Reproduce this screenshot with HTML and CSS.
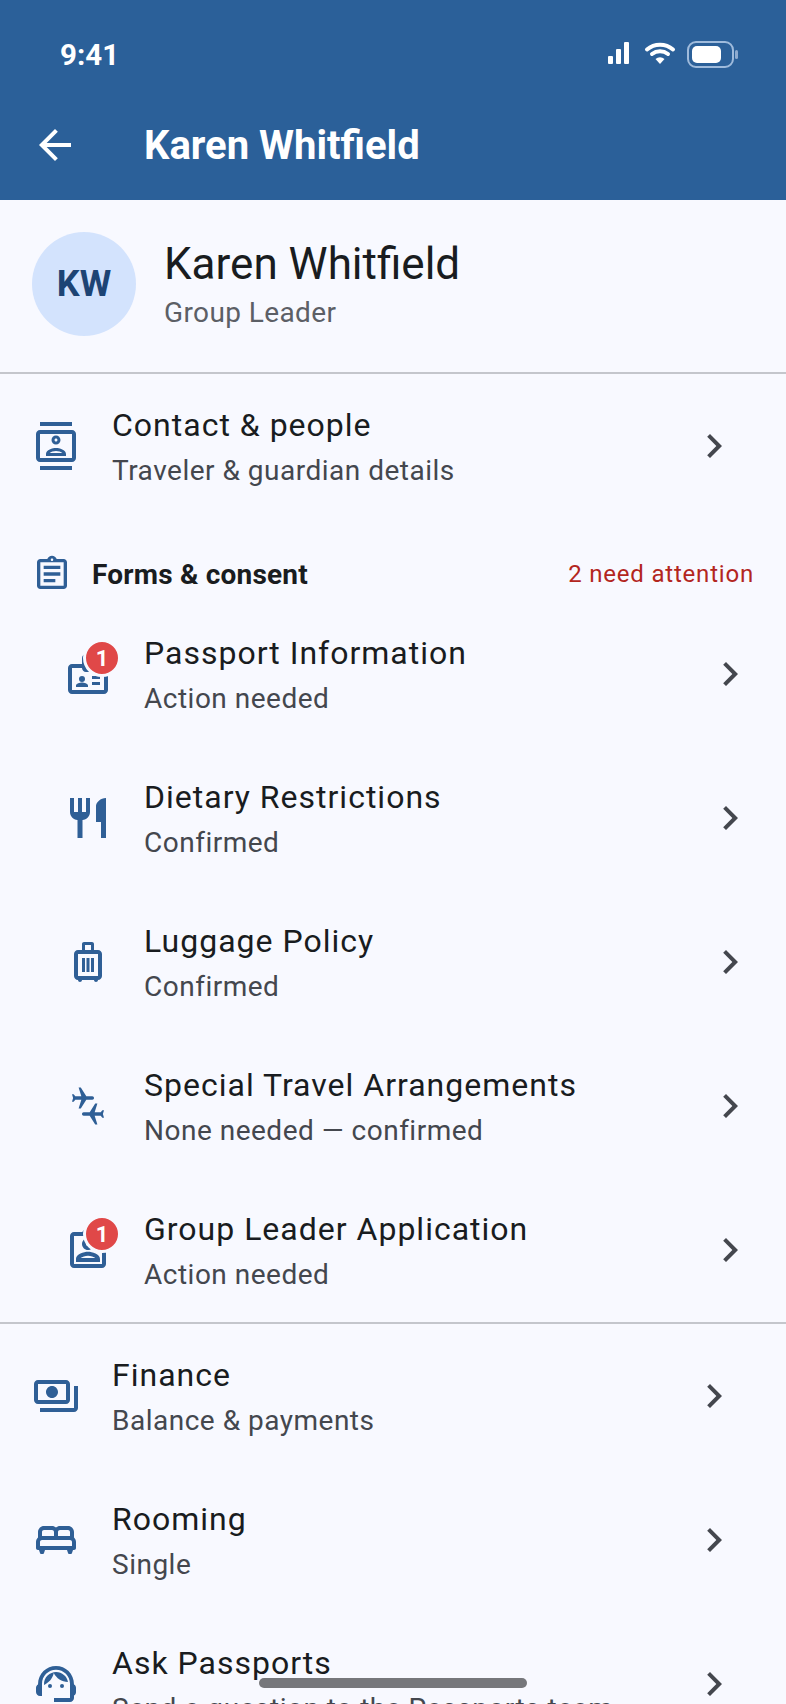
FILE: index.html
```html
<!DOCTYPE html>
<html lang="en">
  <head>
    <meta charset="UTF-8" />
    <meta name="viewport" content="width=device-width, initial-scale=1.0" />
    <title>Karen Whitfield</title>
    <link rel="stylesheet" href="styles.css">
  </head>
  <body>
    <div class="screen">
      <header class="top">
        <div class="status_bar">
          <span class="time">9:41</span>
          <svg class="status_icons" width="130" height="28" viewBox="0 0 130 28">
            <rect x="0" y="15" width="5" height="8" rx="1" fill="#fff" />
            <rect x="8" y="8" width="5" height="15" rx="1" fill="#fff" />
            <rect x="16" y="1" width="5" height="22" rx="1" fill="#fff" />
            <path d="M39 11.5a20 20 0 0 1 26 0" fill="none" stroke="#fff" stroke-width="4" stroke-linecap="round" transform="translate(0 -3)" />
            <path d="M44 13a13 13 0 0 1 16 0" fill="none" stroke="#fff" stroke-width="4" stroke-linecap="round" />
            <path d="M47.500 18l4.500 5 4.500-5a7 7 0 0 0-9 0z" fill="#fff" />
            <rect x="80" y="1" width="45" height="25" rx="8" fill="none" stroke="#9fbbdc" stroke-width="2" />
            <rect x="84" y="5" width="29" height="17" rx="5" fill="#fff" />
            <rect x="127" y="9" width="3" height="9" rx="1.500" fill="#8facd0" />
          </svg>
        </div>
        <div class="app_bar">
          <svg class="back_icon" viewBox="0 0 24 24"><path d="M20 11H7.830l5.590-5.590L12 4l-8 8 8 8 1.410-1.410L7.830 13H20v-2z" /></svg>
          <h1 class="app_title">Karen Whitfield</h1>
        </div>
      </header>

      <section class="profile">
        <div class="avatar">KW</div>
        <div>
          <div class="profile_name">Karen Whitfield</div>
          <div class="profile_role">Group Leader</div>
        </div>
      </section>

      <a class="row">
        <svg class="icon" viewBox="0 0 24 24"><path d="M20 0H4v2h16V0zM4 24h16v-2H4v2zM20 4H4c-1.100 0-2 .9-2 2v12c0 1.100.9 2 2 2h16c1.100 0 2-.9 2-2V6c0-1.100-.9-2-2-2zm0 14H4V6h16v12zm-8-6.750c1.240 0 2.250-1.010 2.250-2.250S13.240 6.750 12 6.750 9.750 7.760 9.750 9s1.010 2.250 2.250 2.250zm0-3c.41 0 .75.34.75.75s-.34.75-.75.75-.75-.34-.75-.75.34-.75.75-.75zM17 15.990c0-2.090-3.310-2.990-5-2.990s-5 .9-5 2.990V17h10v-1.010zM8.810 15.500c.61-.52 2.030-1 3.190-1 1.170 0 2.590.48 3.200 1H8.810z" /></svg>
        <div class="row_text">
          <div class="row_title">Contact &amp; people</div>
          <div class="row_sub">Traveler &amp; guardian details</div>
        </div>
        <svg class="chevron" viewBox="0 0 24 24"><path d="M10 6L8.590 7.410 13.170 12l-4.580 4.590L10 18l6-6z" /></svg>
      </a>

      <div class="forms_head">
        <svg class="forms_icon" viewBox="0 0 24 24"><path d="M7 15h7v2H7zm0-4h10v2H7zm0-4h10v2H7zm12-4h-4.180C14.400 1.840 13.300 1 12 1s-2.400.84-2.820 2H5c-1.100 0-2 .9-2 2v14c0 1.100.9 2 2 2h14c1.100 0 2-.9 2-2V5c0-1.100-.9-2-2-2zm-7-.25c.41 0 .75.34.75.75s-.34.75-.75.75-.75-.34-.75-.75.34-.75.75-.75zM19 19H5V5h14v14z" /></svg>
        <span class="forms_title">Forms &amp; consent</span>
        <span class="forms_alert">2 need attention</span>
      </div>

      <a class="row row_nested">
        <div class="icon_wrap">
          <svg class="icon" viewBox="0 0 24 24"><path d="M20 7h-5V4c0-1.100-.9-2-2-2h-2c-1.100 0-2 .9-2 2v3H4c-1.100 0-2 .9-2 2v11c0 1.100.9 2 2 2h16c1.100 0 2-.9 2-2V9c0-1.100-.9-2-2-2zM11 4h2v5h-2V4zm9 16H4V9h5c0 1.100.9 2 2 2h2c1.100 0 2-.9 2-2h5v11zm-11-4a1.500 1.500 0 1 0 0-3 1.500 1.500 0 0 0 0 3zm3 2.500H6v-.75c0-1 2-1.500 3-1.500s3 .5 3 1.500zM14 13h4v1.500h-4zm0 3h4v1.500h-4z" /></svg>
          <span class="badge">1</span>
        </div>
        <div class="row_text">
          <div class="row_title">Passport Information</div>
          <div class="row_sub">Action needed</div>
        </div>
        <svg class="chevron" viewBox="0 0 24 24"><path d="M10 6L8.590 7.410 13.170 12l-4.580 4.590L10 18l6-6z" /></svg>
      </a>

      <a class="row row_nested">
        <svg class="icon" viewBox="0 0 24 24"><path d="M11 9H9V2H7v7H5V2H3v7c0 2.120 1.660 3.840 3.750 3.970V22h2.500v-9.030C11.340 12.840 13 11.120 13 9V2h-2v7zm5-3v8h2.500v8H21V2c-2.760 0-5 2.240-5 4z" /></svg>
        <div class="row_text">
          <div class="row_title">Dietary Restrictions</div>
          <div class="row_sub">Confirmed</div>
        </div>
        <svg class="chevron" viewBox="0 0 24 24"><path d="M10 6L8.590 7.410 13.170 12l-4.580 4.590L10 18l6-6z" /></svg>
      </a>

      <a class="row row_nested">
        <svg class="icon" viewBox="0 0 24 24"><path d="M17 6h-2V3c0-.55-.45-1-1-1h-4c-.55 0-1 .45-1 1v3H7c-1.100 0-2 .9-2 2v11c0 1.100.9 2 2 2 0 .55.45 1 1 1s1-.45 1-1h6c0 .55.45 1 1 1s1-.45 1-1c1.100 0 2-.9 2-2V8c0-1.100-.9-2-2-2zM10.500 3.500h3V6h-3V3.500zM17 19H7V8h10v11zM9 10h1.500v7H9zm4.500 0H15v7h-1.500zm-2.250 0h1.500v7h-1.500z" /></svg>
        <div class="row_text">
          <div class="row_title">Luggage Policy</div>
          <div class="row_sub">Confirmed</div>
        </div>
        <svg class="chevron" viewBox="0 0 24 24"><path d="M10 6L8.590 7.410 13.170 12l-4.580 4.590L10 18l6-6z" /></svg>
      </a>

      <a class="row row_nested">
        <svg class="icon" viewBox="0 0 24 24">
          <path transform="translate(9.500 8) rotate(90) scale(.55) translate(-11.500 -12)" d="M21 16v-2l-8-5V3.500c0-.83-.67-1.500-1.500-1.500S10 2.670 10 3.500V9l-8 5v2l8-2.500V19l-2 1.500V22l3.500-1 3.500 1v-1.500L13 19v-5.500l8 2.500z" />
          <path transform="translate(14.500 16) rotate(-90) scale(.55) translate(-11.500 -12)" d="M21 16v-2l-8-5V3.500c0-.83-.67-1.500-1.500-1.500S10 2.670 10 3.500V9l-8 5v2l8-2.500V19l-2 1.500V22l3.500-1 3.500 1v-1.500L13 19v-5.500l8 2.500z" />
        </svg>
        <div class="row_text">
          <div class="row_title">Special Travel Arrangements</div>
          <div class="row_sub">None needed — confirmed</div>
        </div>
        <svg class="chevron" viewBox="0 0 24 24"><path d="M10 6L8.590 7.410 13.170 12l-4.580 4.590L10 18l6-6z" /></svg>
      </a>

      <a class="row row_nested">
        <div class="icon_wrap">
          <svg class="icon" viewBox="0 0 24 24"><path d="M19 3h-4.180C14.400 1.840 13.300 1 12 1s-2.400.84-2.820 2H5c-1.100 0-2 .9-2 2v14c0 1.100.9 2 2 2h14c1.100 0 2-.9 2-2V5c0-1.100-.9-2-2-2zm-7-.25c.41 0 .75.34.75.75s-.34.75-.75.75-.75-.34-.75-.75.34-.75.75-.75zM19 19H5V5h14v14zm-7-7c1.650 0 3-1.350 3-3s-1.350-3-3-3-3 1.350-3 3 1.350 3 3 3zm0-4c.55 0 1 .45 1 1s-.45 1-1 1-1-.45-1-1 .45-1 1-1zm-6 8.470V18h12v-1.530c0-2.500-3.970-3.580-6-3.580s-6 1.070-6 3.580zm2.310-.47c.69-.56 2.380-1.120 3.690-1.120s3.010.56 3.690 1.120H8.310z" /></svg>
          <span class="badge">1</span>
        </div>
        <div class="row_text">
          <div class="row_title">Group Leader Application</div>
          <div class="row_sub">Action needed</div>
        </div>
        <svg class="chevron" viewBox="0 0 24 24"><path d="M10 6L8.590 7.410 13.170 12l-4.580 4.590L10 18l6-6z" /></svg>
      </a>

      <hr class="divider" />

      <a class="row">
        <svg class="icon" viewBox="0 0 24 24"><path d="M19 14V6c0-1.100-.9-2-2-2H3c-1.100 0-2 .9-2 2v8c0 1.100.9 2 2 2h14c1.100 0 2-.9 2-2zm-2 0H3V6h14v8zm-7-7c-1.660 0-3 1.340-3 3s1.340 3 3 3 3-1.340 3-3-1.340-3-3-3zm13 0v11c0 1.100-.9 2-2 2H4v-2h17V7h2z" /></svg>
        <div class="row_text">
          <div class="row_title">Finance</div>
          <div class="row_sub">Balance &amp; payments</div>
        </div>
        <svg class="chevron" viewBox="0 0 24 24"><path d="M10 6L8.590 7.410 13.170 12l-4.580 4.590L10 18l6-6z" /></svg>
      </a>

      <a class="row">
        <svg class="icon" viewBox="0 0 24 24"><path d="M21 10.780V8c0-1.650-1.350-3-3-3h-4c-.77 0-1.470.3-2 .78-.53-.48-1.230-.78-2-.78H6C4.350 5 3 6.350 3 8v2.780c-.61.55-1 1.340-1 2.220v3c0 .6.4 1 1 1h.5l.5 1.500c.1.3.3.5.7.5h.6c.4 0 .6-.2.7-.5L6.500 17h11l.5 1.500c.1.3.3.5.7.5h.6c.4 0 .6-.2.7-.5l.5-1.500h.5c.6 0 1-.4 1-1v-3c0-.88-.39-1.670-1-2.220zM14 7h4c.55 0 1 .45 1 1v2h-6V8c0-.55.45-1 1-1zM5 8c0-.55.45-1 1-1h4c.55 0 1 .45 1 1v2H5V8zm-1 7v-2c0-.55.45-1 1-1h14c.55 0 1 .45 1 1v2H4z" /></svg>
        <div class="row_text">
          <div class="row_title">Rooming</div>
          <div class="row_sub">Single</div>
        </div>
        <svg class="chevron" viewBox="0 0 24 24"><path d="M10 6L8.590 7.410 13.170 12l-4.580 4.590L10 18l6-6z" /></svg>
      </a>

      <a class="row">
        <svg class="icon" viewBox="0 0 24 24">
          <path d="M21 12.220C21 6.730 16.740 3 12 3c-4.690 0-9 3.650-9 9.280-.6.34-1 .98-1 1.720v2c0 1.100.9 2 2 2h1v-6.100c0-3.870 3.130-7 7-7s7 3.130 7 7V19h-8v2h8c1.100 0 2-.9 2-2v-1.220c.59-.31 1-.92 1-1.620v-2.300c0-.7-.41-1.310-1-1.640z" />
          <circle cx="9" cy="13" r="1" />
          <circle cx="15" cy="13" r="1" />
          <path d="M18 11.030C17.520 8.180 15.040 6 12.050 6c-3.030 0-6.290 2.510-6.030 6.450 2.470-1.010 4.330-3.210 4.860-5.890 1.310 2.630 4 4.440 7.120 4.470z" />
        </svg>
        <div class="row_text">
          <div class="row_title">Ask Passports</div>
          <div class="row_sub">Send a question to the Passports team</div>
        </div>
        <svg class="chevron" viewBox="0 0 24 24"><path d="M10 6L8.590 7.410 13.170 12l-4.580 4.590L10 18l6-6z" /></svg>
      </a>

      <div class="home_bar"></div>
    </div>
  </body>
</html>
```

FILE: styles.css
```css
* {
  margin: 0;
  padding: 0;
  box-sizing: border-box;
}

body {
  font-family: Roboto, "Liberation Sans", sans-serif;
  background-color: #f8f9ff;
  color: #191c20;
}

.screen {
  position: relative;
  width: 786px;
  height: 1704px;
  overflow: hidden;
}

.top {
  background-color: #2b6099;
  color: #fff;
  height: 200px;
}

.status_bar {
  height: 88px;
  padding: 22px 48px 0 60px;
  display: flex;
  justify-content: space-between;
  align-items: center;
}

.time {
  font-size: 29.500px;
  font-weight: 700;
}

.status_icons {
  display: block;
}

.app_bar {
  height: 112px;
  padding: 2px 0 0 31px;
  display: flex;
  align-items: center;
  gap: 65px;
}

.back_icon {
  width: 48px;
  height: 48px;
  flex-shrink: 0;
  fill: #fff;
}

.app_title {
  font-size: 40px;
  font-weight: 700;
}

.profile {
  display: flex;
  align-items: center;
  gap: 28px;
  padding: 32px 32px 36px;
  border-bottom: 2px solid #c4c6cc;
}

.avatar {
  width: 104px;
  height: 104px;
  border-radius: 50%;
  background-color: #d3e3fd;
  color: #1d4474;
  font-size: 36px;
  font-weight: 700;
  display: flex;
  align-items: center;
  justify-content: center;
}

.profile_name {
  font-size: 44px;
  line-height: 56px;
  margin-bottom: 1px;
}

.profile_role {
  font-size: 28px;
  line-height: 40px;
  letter-spacing: 0.4px;
  color: #5c5f66;
}

.row {
  display: flex;
  align-items: center;
  gap: 32px;
  height: 144px;
  padding: 0 48px 0 32px;
}

.row_nested {
  padding: 0 32px 0 64px;
}

.icon {
  width: 48px;
  height: 48px;
  flex-shrink: 0;
  display: block;
  fill: #2f5f96;
}

.icon_wrap {
  position: relative;
  width: 48px;
  height: 48px;
  flex-shrink: 0;
}

.badge {
  position: absolute;
  left: 19px;
  top: -11px;
  width: 38px;
  height: 38px;
  border: 3px solid #f8f9ff;
  border-radius: 50%;
  background-color: #e04848;
  color: #fff;
  font-size: 22px;
  font-weight: 700;
  display: flex;
  align-items: center;
  justify-content: center;
}

.row_text {
  flex: 1;
}

.row_title {
  font-size: 32px;
  line-height: 48px;
  letter-spacing: 1px;
}

.row_sub {
  font-size: 28px;
  line-height: 40px;
  letter-spacing: 0.5px;
  color: #44474e;
  margin-top: 2px;
  white-space: nowrap;
}

.chevron {
  width: 48px;
  height: 48px;
  flex-shrink: 0;
  fill: #44474e;
}

.forms_head {
  display: flex;
  align-items: center;
  height: 56px;
  margin-top: 28px;
  padding: 0 32px;
}

.forms_icon {
  width: 40px;
  height: 40px;
  margin-right: 20px;
  fill: #2f5f96;
}

.forms_title {
  flex: 1;
  font-size: 28px;
  font-weight: 700;
  letter-spacing: 0.2px;
}

.forms_alert {
  font-size: 24px;
  letter-spacing: 0.8px;
  color: #b3261e;
}

.divider {
  border: none;
  height: 2px;
  background-color: #c4c6cc;
}

.home_bar {
  position: absolute;
  left: 259px;
  top: 1678px;
  width: 268px;
  height: 10px;
  border-radius: 5px;
  background-color: #76777b;
}
```
